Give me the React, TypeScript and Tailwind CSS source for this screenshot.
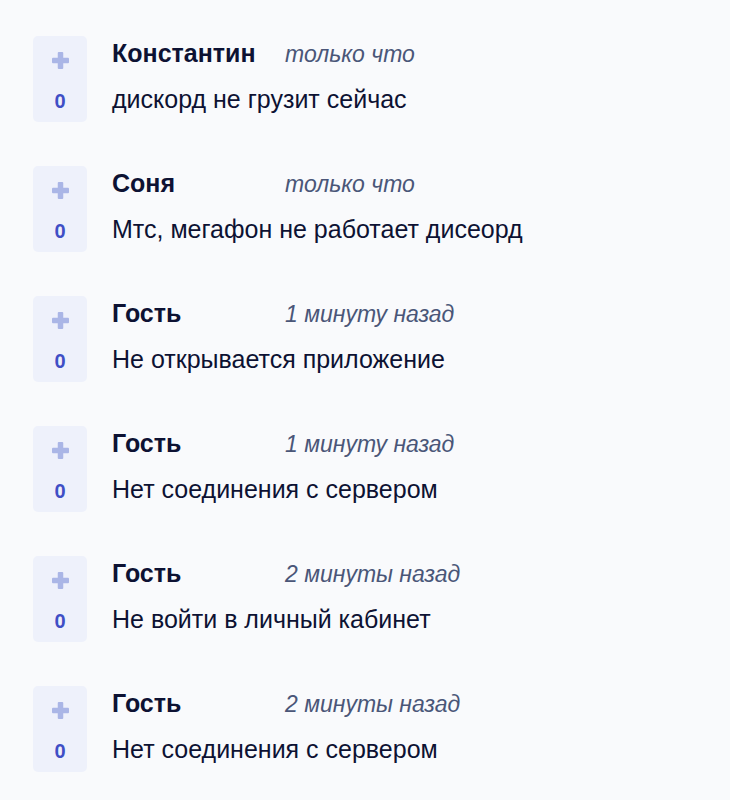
const comments = [
  { name: "Константин", time: "только что", text: "дискорд не грузит сейчас" },
  { name: "Соня", time: "только что", text: "Мтс, мегафон не работает дисеорд" },
  { name: "Гость", time: "1 минуту назад", text: "Не открывается приложение" },
  { name: "Гость", time: "1 минуту назад", text: "Нет соединения с сервером" },
  { name: "Гость", time: "2 минуты назад", text: "Не войти в личный кабинет" },
  { name: "Гость", time: "2 минуты назад", text: "Нет соединения с сервером" },
]

function PlusIcon() {
  return (
    <svg width="17" height="17" viewBox="0 0 17 17" aria-hidden="true">
      <rect x="5.75" y="0" width="5.5" height="17" rx="1" fill="#aab6e6" />
      <rect x="0" y="5.75" width="17" height="5.5" rx="1" fill="#aab6e6" />
    </svg>
  )
}

function CommentRow({ name, time, text }: { name: string; time: string; text: string }) {
  return (
    <div className="flex items-start gap-[25px]">
      {/* Vote box */}
      <div className="flex flex-col items-center w-[54px] h-[86px] shrink-0 rounded-[5px] bg-[#eef1fb] pt-[16px]">
        <PlusIcon />
        <span className="mt-[22px] text-[20px] font-bold leading-[20px] text-[#3f4fc6]">0</span>
      </div>

      {/* Text */}
      <div className="flex flex-col pt-[3px]">
        <div className="flex items-baseline">
          <span className="w-[173px] text-[25px] font-bold leading-[28px] text-[#0d1233]">{name}</span>
          <span className="text-[23px] italic leading-[28px] text-[#4a5678]">{time}</span>
        </div>
        <p className="mt-[17px] text-[25px] leading-[28px] text-[#0d1233]">{text}</p>
      </div>
    </div>
  )
}

export default function App() {
  return (
    <div
      className="min-h-[800px] w-[730px] bg-[#f9fafc] pl-[33px] pt-[36px] flex flex-col gap-[44px]"
      style={{ fontFamily: '"Liberation Sans", Arial, sans-serif' }}>
      {comments.map((c, i) => (
        <CommentRow key={i} {...c} />
      ))}
    </div>
  )
}
